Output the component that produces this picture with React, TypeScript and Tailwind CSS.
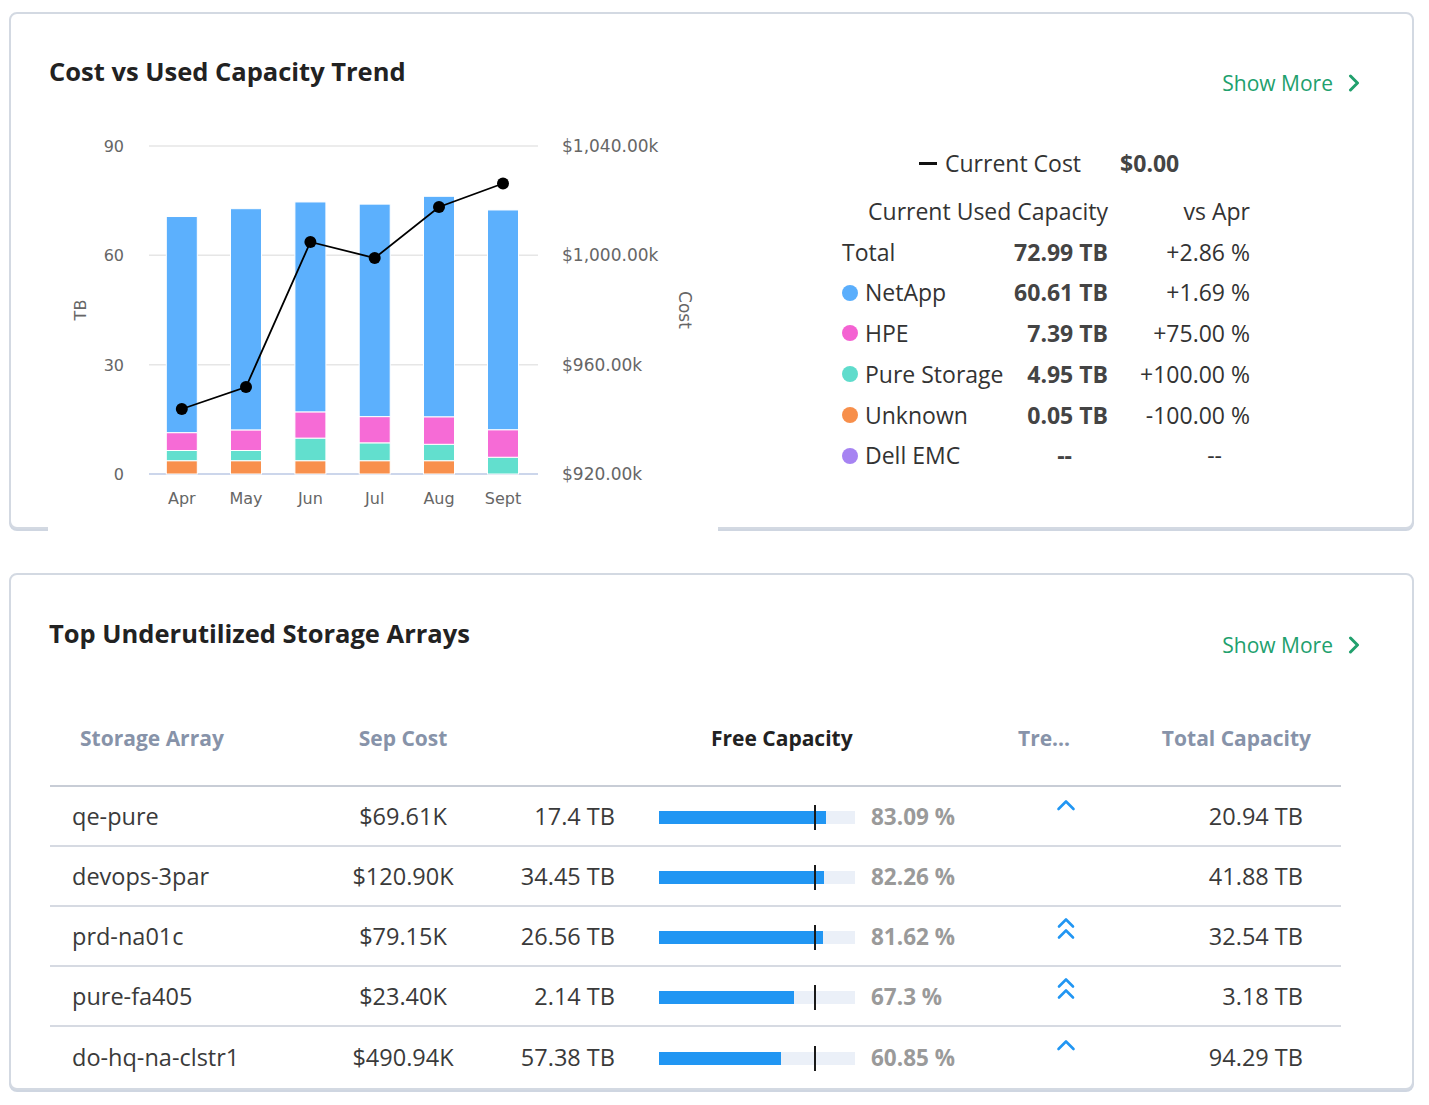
import React from 'react';

const months = ['Apr', 'May', 'Jun', 'Jul', 'Aug', 'Sept'];
const barX = [133.8, 198, 262.4, 326.7, 391, 455];
// stacks from the bottom: unknown, pure storage, hpe, netapp
const stacks = [
  [3.65, 2.8, 4.9, 59.3],
  [3.65, 2.8, 5.65, 60.7],
  [3.65, 6.2, 7.2, 57.6],
  [3.65, 4.9, 7.2, 58.3],
  [3.65, 4.5, 7.55, 60.5],
  [0, 4.6, 7.55, 60.3]
];
const stackColors = ['#f8904d', '#62dfce', '#f66bd6', '#5cb0fd'];
const costPoints = [279, 257, 112, 128, 77, 53.5];

const leftTicks = [90, 60, 30, 0];
const rightTicks = ['$1,040.00k', '$1,000.00k', '$960.00k', '$920.00k'];

const yOf = (v: number) => 344 - v * 3.6444;

function ShowMore() {
  return (
    <a className="mt-[14px] flex items-center gap-[15px] text-[21px] leading-[28px] text-[#21a06d]" href="#">
      Show More
      <svg width="12" height="18" viewBox="0 0 12 18" fill="none">
        <path d="M2.5 2 L9.5 9 L2.5 16" stroke="#21a06d" strokeWidth="3" strokeLinecap="round" strokeLinejoin="round" />
      </svg>
    </a>
  );
}

function TrendChart() {
  return (
    <svg
      className="relative z-10 shrink-0 bg-white"
      width="670"
      height="402"
      viewBox="0 0 670 402"
      style={{fontFamily: '"DejaVu Sans", sans-serif'}}
    >
      {leftTicks.map((tick, i) => {
        const y = yOf(tick);
        return (
          <g key={tick}>
            <line x1="101" x2="490" y1={y} y2={y} stroke={tick === 0 ? '#ccd6eb' : '#e6e6e6'} strokeWidth={tick === 0 ? 2 : 1.5} />
            <text x="76" y={y + 6} textAnchor="end" fontSize="16" fill="#666">
              {tick}
            </text>
            <text x="514" y={y + 6} fontSize="17" fill="#666">
              {rightTicks[i]}
            </text>
          </g>
        );
      })}

      {stacks.map((stack, i) => {
        let base = 0;
        return (
          <g key={months[i]}>
            {stack.map((value, j) => {
              if (!value) return null;
              const top = base + value;
              const rect = (
                <rect
                  key={j}
                  x={barX[i] - 15.5}
                  width="31"
                  y={yOf(top)}
                  height={yOf(base) - yOf(top)}
                  fill={stackColors[j]}
                  stroke="#fff"
                  strokeWidth="1"
                />
              );
              base = top;
              return rect;
            })}
            <text x={barX[i]} y="374" textAnchor="middle" fontSize="16" fill="#666">
              {months[i]}
            </text>
          </g>
        );
      })}

      <polyline
        points={barX.map((x, i) => `${x},${costPoints[i]}`).join(' ')}
        fill="none"
        stroke="#000"
        strokeWidth="1.8"
      />
      {barX.map((x, i) => (
        <circle key={x} cx={x} cy={costPoints[i]} r="6" fill="#000" />
      ))}

      <text x="32" y="180" textAnchor="middle" fontSize="16" fill="#666" transform="rotate(-90 32 180)" dy="6">
        TB
      </text>
      <text x="637" y="180" textAnchor="middle" fontSize="17" fill="#666" transform="rotate(90 637 180)" dy="6">
        Cost
      </text>
    </svg>
  );
}

const legendRows = [
  {name: 'NetApp', color: '#5aaefc', value: '60.61 TB', change: '+1.69 %'},
  {name: 'HPE', color: '#f462d2', value: '7.39 TB', change: '+75.00 %'},
  {name: 'Pure Storage', color: '#5fdccc', value: '4.95 TB', change: '+100.00 %'},
  {name: 'Unknown', color: '#f78f4b', value: '0.05 TB', change: '-100.00 %'},
  {name: 'Dell EMC', color: '#a683f2', value: '--', change: '--'}
];

function Legend() {
  return (
    <div className="ml-[124px] mt-[13px] w-[408px] text-[23px] text-[#333]">
      <div className="flex h-[40px] items-center pl-[77px]">
        <span className="mr-[8px] h-[3px] w-[18px] bg-[#111]" />
        <span>Current Cost</span>
        <span className="ml-[39px] font-bold text-[#444]">$0.00</span>
      </div>
      <div className="mt-[8px] grid grid-cols-[166px_100px_142px] leading-[40.7px]">
        <div className="col-span-2 text-right">Current Used Capacity</div>
        <div className="text-right">vs Apr</div>

        <div>Total</div>
        <div className="text-right font-bold text-[#444]">72.99 TB</div>
        <div className="text-right">+2.86 %</div>

        {legendRows.map((row) => (
          <React.Fragment key={row.name}>
            <div className="flex items-center gap-[7px] whitespace-nowrap">
              <span className="h-[16px] w-[16px] shrink-0 rounded-full" style={{backgroundColor: row.color}} />
              {row.name}
            </div>
            <div className={row.value === '--' ? 'pr-[36px] text-right font-bold text-[#444]' : 'text-right font-bold text-[#444]'}>
              {row.value}
            </div>
            <div className={row.change === '--' ? 'pr-[28px] text-right' : 'text-right'}>{row.change}</div>
          </React.Fragment>
        ))}
      </div>
    </div>
  );
}

type Trend = 'up' | 'double' | null;

const arrays: {name: string; cost: string; free: string; pct: number; trend: Trend; total: string}[] = [
  {name: 'qe-pure', cost: '$69.61K', free: '17.4 TB', pct: 83.09, trend: 'up', total: '20.94 TB'},
  {name: 'devops-3par', cost: '$120.90K', free: '34.45 TB', pct: 82.26, trend: null, total: '41.88 TB'},
  {name: 'prd-na01c', cost: '$79.15K', free: '26.56 TB', pct: 81.62, trend: 'double', total: '32.54 TB'},
  {name: 'pure-fa405', cost: '$23.40K', free: '2.14 TB', pct: 67.3, trend: 'double', total: '3.18 TB'},
  {name: 'do-hq-na-clstr1', cost: '$490.94K', free: '57.38 TB', pct: 60.85, trend: 'up', total: '94.29 TB'}
];

function TrendIcon({trend}: {trend: Trend}) {
  if (!trend) return null;
  return (
    <svg width="20" height="24" viewBox="0 0 20 24" fill="none">
      {trend === 'up' ? (
        <path d="M2.5 12 L10 4.5 L17.5 12" stroke="#2196f3" strokeWidth="2.6" strokeLinecap="round" strokeLinejoin="round" />
      ) : (
        <path
          d="M3 9.5 L10 2.5 L17 9.5 M3 20.5 L10 13.5 L17 20.5"
          stroke="#2196f3"
          strokeWidth="2.6"
          strokeLinecap="round"
          strokeLinejoin="round"
        />
      )}
    </svg>
  );
}

function UnderutilizedTable() {
  return (
    <div className="ml-[39px] mt-[56px] w-[1291px]">
      <div className="flex h-[72px] items-center border-b-2 border-[#c8cdd6] pb-[22px] text-[21px] font-bold">
        <div className="w-[280px] pl-[30px] text-[#8793a9]">Storage Array</div>
        <div className="w-[146px] text-center text-[#8793a9]">Sep Cost</div>
        <div className="w-[139px]" />
        <div className="w-[395px] pl-[96px] text-[#222]">Free Capacity</div>
        <div className="w-[110px] pl-[8px] text-[#8793a9]">Tre...</div>
        <div className="w-[221px] pr-[30px] text-right text-[#8793a9]">Total Capacity</div>
      </div>
      {arrays.map((row, i) => (
        <div
          key={row.name}
          className={
            i < arrays.length - 1
              ? 'flex h-[60px] items-center border-b-2 border-[#d6dae2] pt-[2px] text-[23.5px] text-[#3a3a3a]'
              : 'flex h-[60px] items-center pt-[2px] text-[23.5px] text-[#3a3a3a]'
          }
        >
          <div className="w-[280px] pl-[22px]">{row.name}</div>
          <div className="w-[146px] text-center">{row.cost}</div>
          <div className="w-[139px] text-right">{row.free}</div>
          <div className="flex w-[395px] items-center pl-[44px]">
            <div className="relative h-[13px] w-[196px] bg-[#ebf0f8]">
              <div className="h-full bg-[#2196f3]" style={{width: `${row.pct * 2.01}px`}} />
              <div className="absolute left-[155px] top-[-6px] h-[25px] w-[2px] bg-[#1a1a1a]" />
            </div>
            <span className="ml-[16px] text-[22.5px] font-bold text-[#9a9a9a]">{row.pct} %</span>
          </div>
          <div className="flex h-full w-[110px] items-start justify-end pr-[44px] pt-[8px]">
            <TrendIcon trend={row.trend} />
          </div>
          <div className="w-[221px] pr-[38px] text-right">{row.total}</div>
        </div>
      ))}
    </div>
  );
}

export default function App() {
  return (
    <div
      className="min-h-[1105px] bg-white pl-[9px] pt-[12px]"
      style={{fontFamily: '"Open Sans", "Liberation Sans", sans-serif'}}
    >
      <div className="flex w-[1405px] flex-col gap-[44px]">
        <section className="h-[517px] rounded-lg border-2 border-[#d3d9e2] bg-white shadow-[0_2px_0_0_#cfd6e1]">
          <div className="flex items-start justify-between pl-[38px] pr-[52px] pt-[41px]">
            <h1 className="text-[25.5px] font-bold leading-[32px] text-[#222]">Cost vs Used Capacity Trend</h1>
            <ShowMore />
          </div>
          <div className="mt-[33px] flex pl-[37px]">
            <TrendChart />
            <Legend />
          </div>
        </section>

        <section className="h-[517px] rounded-lg border-2 border-[#d3d9e2] bg-white shadow-[0_2px_0_0_#cfd6e1]">
          <div className="flex items-start justify-between pl-[38px] pr-[52px] pt-[42px]">
            <h2 className="text-[25.5px] font-bold leading-[32px] text-[#222]">Top Underutilized Storage Arrays</h2>
            <ShowMore />
          </div>
          <UnderutilizedTable />
        </section>
      </div>
    </div>
  );
}
